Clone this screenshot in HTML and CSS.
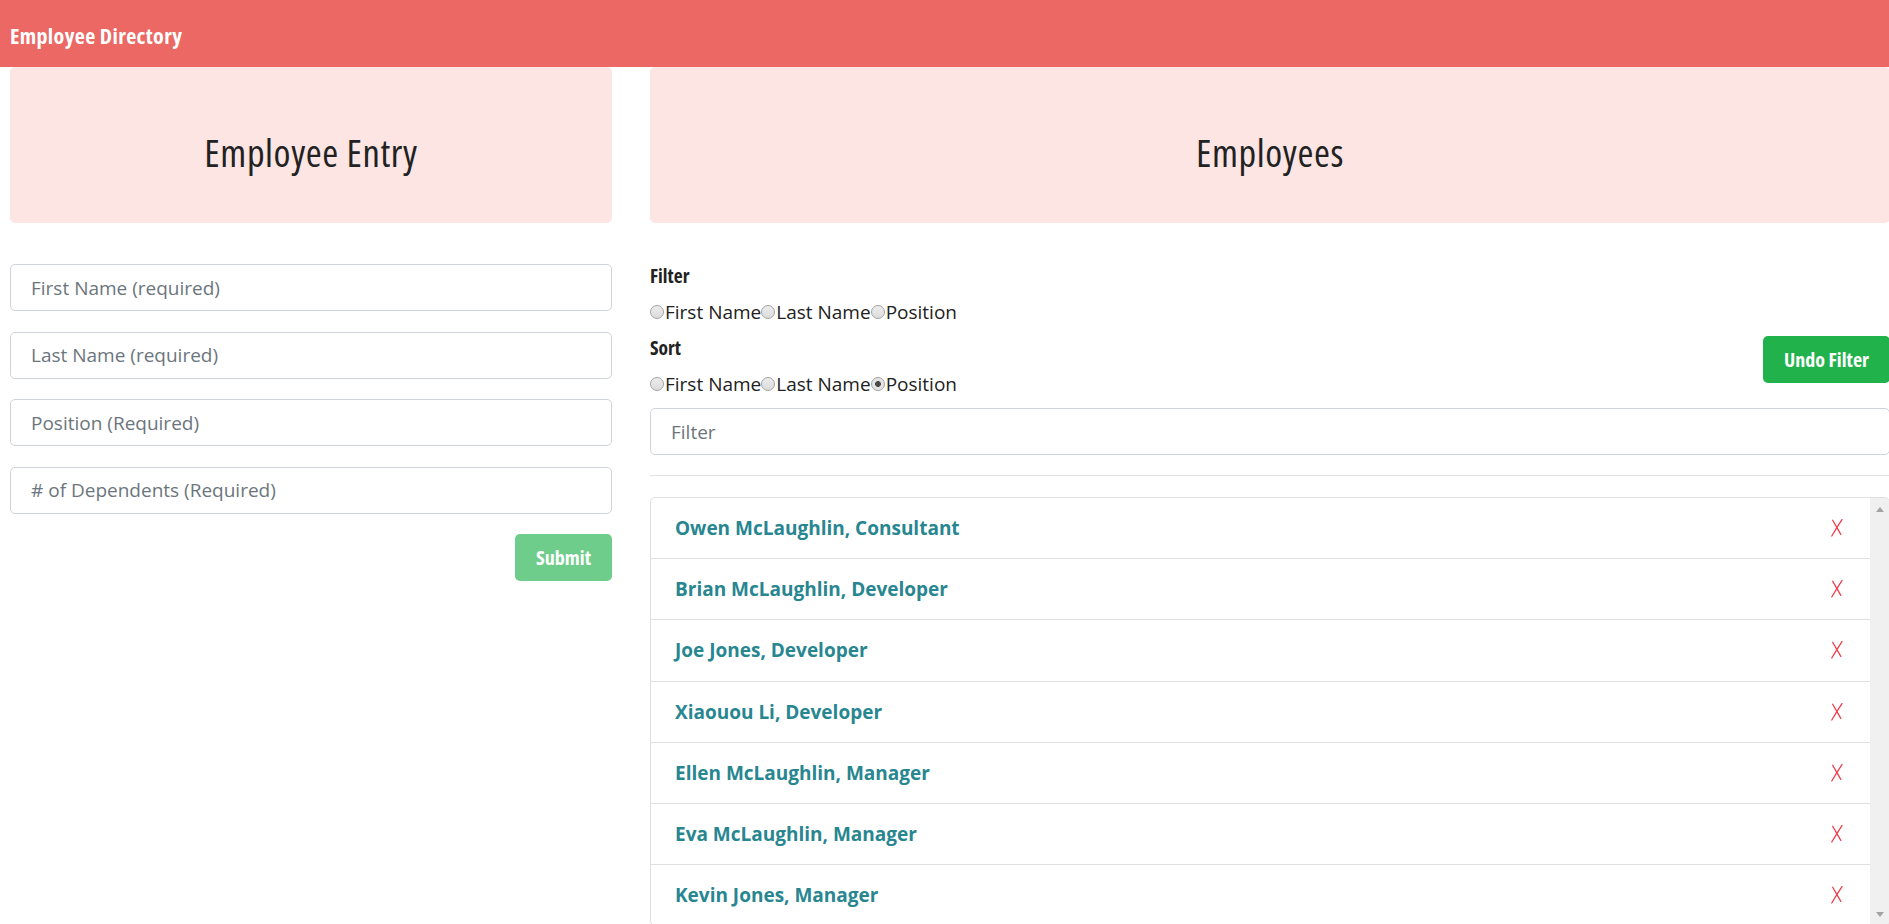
FILE: index.html
```html
<!DOCTYPE html>
<html lang="en">
<head>
<meta charset="utf-8">
<title>Employee Directory</title>
<link rel="stylesheet" href="styles.css">
</head>
<body>
<nav class="navbar"><span class="brand">Employee Directory</span></nav>
<main class="layout">
  <section class="col-left">
    <div class="jumbo"><h1>Employee Entry</h1></div>
    <form class="entry">
      <input class="field" type="text" placeholder="First Name (required)">
      <input class="field" type="text" placeholder="Last Name (required)">
      <input class="field" type="text" placeholder="Position (Required)">
      <input class="field" type="text" placeholder="# of Dependents (Required)">
      <div class="actions"><button class="btn btn-submit" type="button" disabled>Submit</button></div>
    </form>
  </section>
  <section class="col-right">
    <div class="jumbo"><h1>Employees</h1></div>
    <div class="controls">
      <div class="options">
        <div class="label">Filter</div>
        <div class="radios">
          <input type="radio" name="filter" id="f1"><label for="f1">First Name</label>
          <input type="radio" name="filter" id="f2"><label for="f2">Last Name</label>
          <input type="radio" name="filter" id="f3"><label for="f3">Position</label>
        </div>
        <div class="label">Sort</div>
        <div class="radios">
          <input type="radio" name="sort" id="s1"><label for="s1">First Name</label>
          <input type="radio" name="sort" id="s2"><label for="s2">Last Name</label>
          <input type="radio" name="sort" id="s3" checked><label for="s3">Position</label>
        </div>
      </div>
      <button class="btn btn-undo" type="button">Undo Filter</button>
    </div>
    <input class="field filter-field" type="text" placeholder="Filter">
    <hr class="divider">
    <div class="list-box">
      <ul class="list">
        <li class="item"><span class="name">Owen McLaughlin, Consultant</span><svg class="del" width="12" height="18" viewBox="0 0 12 18"><path d="M1.7 1.2 L9.8 15.4 M11 0.6 Q6 8 0.8 17" /></svg></li>
        <li class="item"><span class="name">Brian McLaughlin, Developer</span><svg class="del" width="12" height="18" viewBox="0 0 12 18"><path d="M1.7 1.2 L9.8 15.4 M11 0.6 Q6 8 0.8 17" /></svg></li>
        <li class="item"><span class="name">Joe Jones, Developer</span><svg class="del" width="12" height="18" viewBox="0 0 12 18"><path d="M1.7 1.2 L9.8 15.4 M11 0.6 Q6 8 0.8 17" /></svg></li>
        <li class="item"><span class="name">Xiaouou Li, Developer</span><svg class="del" width="12" height="18" viewBox="0 0 12 18"><path d="M1.7 1.2 L9.8 15.4 M11 0.6 Q6 8 0.8 17" /></svg></li>
        <li class="item"><span class="name">Ellen McLaughlin, Manager</span><svg class="del" width="12" height="18" viewBox="0 0 12 18"><path d="M1.7 1.2 L9.8 15.4 M11 0.6 Q6 8 0.8 17" /></svg></li>
        <li class="item"><span class="name">Eva McLaughlin, Manager</span><svg class="del" width="12" height="18" viewBox="0 0 12 18"><path d="M1.7 1.2 L9.8 15.4 M11 0.6 Q6 8 0.8 17" /></svg></li>
        <li class="item"><span class="name">Kevin Jones, Manager</span><svg class="del" width="12" height="18" viewBox="0 0 12 18"><path d="M1.7 1.2 L9.8 15.4 M11 0.6 Q6 8 0.8 17" /></svg></li>
      </ul>
      <div class="scrollbar" aria-hidden="true"><span class="arrow arrow-up"></span><span class="arrow arrow-down"></span></div>
    </div>
  </section>
</main>
</body>
</html>
```
FILE: styles.css
```css
:root {
  --narrow: "Open Sans", "Noto Sans", sans-serif;
}

html, body {
  margin: 0;
  height: 100%;
  overflow: hidden;
}

body {
  font-family: "Open Sans", "Noto Sans", sans-serif;
  font-size: 19px;
  color: #222;
  background: #fff;
}

.navbar {
  height: 67px;
  box-sizing: border-box;
  padding: 20px 10px 0;
  background: #eb6864;
}

.brand {
  font-family: var(--narrow);
  font-stretch: 75%;
  font-weight: 700;
  font-size: 22px;
  letter-spacing: 0.35px;
  line-height: 30px;
  color: #fff;
}

.layout {
  display: flex;
  gap: 38px;
  padding-left: 10px;
}

.col-left {
  flex: none;
  width: 602px;
}

.col-right {
  flex: none;
  width: 1240px;
}

.jumbo {
  height: 156px;
  box-sizing: border-box;
  padding-top: 63px;
  background: #fde5e4;
  border-radius: 5px;
  text-align: center;
}

.jumbo h1 {
  margin: 0;
  font-family: var(--narrow);
  font-stretch: 75%;
  font-weight: 500;
  font-size: 38.5px;
  letter-spacing: 0.6px;
  line-height: 44px;
  color: #222;
}

.entry {
  display: flex;
  flex-direction: column;
  gap: 20.5px;
  margin: 41px 0 0;
}

.field {
  display: block;
  box-sizing: border-box;
  width: 100%;
  height: 47px;
  margin: 0;
  padding: 0 20px;
  border: 1px solid #ced4da;
  border-radius: 5px;
  font-family: "Open Sans", "Noto Sans", sans-serif;
  font-size: 19px;
  color: #495057;
  background: #fff;
}

.field::placeholder {
  color: #6c757d;
  opacity: 1;
}

.actions {
  display: flex;
  justify-content: flex-end;
}

.btn {
  height: 47px;
  padding: 0 21px;
  border: 0;
  border-radius: 5px;
  font-family: var(--narrow);
  font-stretch: 75%;
  font-weight: 700;
  font-size: 20px;
  color: #fff;
}

.btn-submit {
  background: #6fcd8b;
}

.btn-undo {
  flex: none;
  background: #22b24c;
  margin-bottom: 19px;
}

.controls {
  display: flex;
  justify-content: space-between;
  align-items: flex-end;
  margin-top: 35px;
}

.label {
  font-family: var(--narrow);
  font-stretch: 75%;
  font-weight: 700;
  font-size: 19.5px;
  line-height: 36px;
  color: #222;
}

.radios {
  display: flex;
  align-items: center;
  height: 36px;
  font-size: 19px;
  color: #222;
}

.radios input {
  appearance: none;
  -webkit-appearance: none;
  box-sizing: border-box;
  width: 14px;
  height: 14px;
  margin: 0 1px 0 0;
  border: 1px solid #a3a3a3;
  border-radius: 50%;
  background: linear-gradient(#ececec, #dcdcdc);
}

.radios input:checked {
  background: radial-gradient(circle, #4a4a4a 0 2.6px, #e4e4e4 3.2px);
}

.filter-field {
  margin-top: 6px;
}

.divider {
  margin: 20px 0 21px;
  border: 0;
  border-top: 1px solid #e2e2e2;
}

.list-box {
  display: flex;
  box-sizing: border-box;
  height: 429px;
  border: 1px solid #dfdfdf;
  border-radius: 5px;
  overflow: hidden;
}

.list {
  flex: 1;
  list-style: none;
  margin: 0;
  padding: 0;
}

.scrollbar {
  flex: none;
  width: 19px;
  display: flex;
  flex-direction: column;
  justify-content: space-between;
  align-items: center;
  background: #f0f0f0;
}

.arrow {
  width: 0;
  height: 0;
  border-left: 4.5px solid transparent;
  border-right: 4.5px solid transparent;
}

.arrow-up {
  margin-top: 8.5px;
  border-bottom: 5px solid #a3a3a3;
}

.arrow-down {
  margin-bottom: 8.5px;
  border-top: 5px solid #a3a3a3;
}

.item {
  display: flex;
  align-items: center;
  justify-content: space-between;
  box-sizing: border-box;
  height: 61.2px;
  padding: 0 27px 0 24px;
  border-bottom: 1px solid #dfdfdf;
}

.name {
  font-weight: 700;
  color: #278690;
}

.del {
  display: block;
  flex: none;
}

.del path {
  fill: none;
  stroke: #ec3d4c;
  stroke-width: 1.3;
  stroke-linecap: round;
}
```
